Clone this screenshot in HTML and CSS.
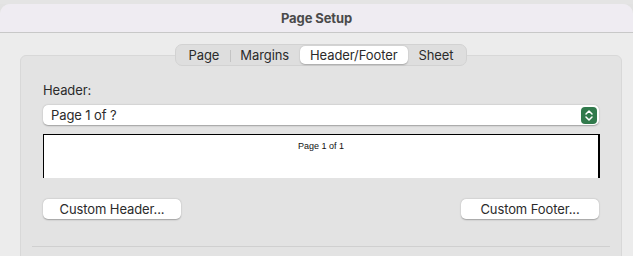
FILE: index.html
```html
<!DOCTYPE html>
<html lang="en">
<head>
    <meta charset="UTF-8">
    <meta name="viewport" content="width=device-width, initial-scale=1.0">
    <title>Page Setup</title>
    <link rel="stylesheet" href="styles.css">
</head>
<body>

    <div class="backdrop"></div>

    <div class="sheet">
        <div class="titlebar">Page Setup</div>

        <div class="content">
            <div class="tabs">
                <span class="tab">Page</span>
                <span class="tab">Margins</span>
                <span class="tab selected">Header/Footer</span>
                <span class="tab">Sheet</span>
            </div>

            <div class="group">
                <label class="label">Header:</label>

                <div class="popup">
                    <span>Page 1 of ?</span>
                    <span class="stepper">
                        <svg width="16" height="17" viewBox="0 0 16 17">
                            <path d="M5 7 L8 4 L11 7" fill="none" stroke="#fff" stroke-width="1.5" stroke-linecap="round" stroke-linejoin="round"/>
                            <path d="M5 10 L8 13 L11 10" fill="none" stroke="#fff" stroke-width="1.5" stroke-linecap="round" stroke-linejoin="round"/>
                        </svg>
                    </span>
                </div>

                <div class="preview">Page 1 of 1</div>

                <div class="buttons">
                    <button class="btn">Custom Header...</button>
                    <button class="btn">Custom Footer...</button>
                </div>

                <div class="separator"></div>
            </div>
        </div>
    </div>

</body>
</html>
```

FILE: styles.css
```css
body {
    margin: 0;
    font-family: Inter, "Liberation Sans", sans-serif;
    font-size: 13px;
    letter-spacing: -0.1px;
    color: #2b2b2b;
    background-color: #e2e2e2;
    height: 256px;
    overflow: hidden;
}

.backdrop {
    height: 4px;
    background-color: #e4e4e4;
}

.sheet {
    background-color: #ececec;
    border-top-left-radius: 10px;
    border-top-right-radius: 10px;
    height: 252px;
    overflow: hidden;
}

.titlebar {
    height: 28px;
    line-height: 28px;
    text-align: center;
    font-weight: 700;
    color: #4a4a4a;
    background-color: #efecf2;
    border-bottom: 1px solid #c8c8c8;
}

.content {
    padding: 11px 11px 0 20px;
    display: flex;
    flex-direction: column;
    align-items: center;
}

.tabs {
    display: flex;
    height: 22px;
    padding: 0 2px;
    background-color: #dedede;
    border: 1px solid #d2d2d2;
    border-radius: 7px;
    box-sizing: border-box;
    align-items: center;
    position: relative;
    z-index: 1;
}

.tab {
    padding: 0 10.5px;
    line-height: 18px;
    color: #2b2b2b;
    position: relative;
}

.tab + .tab::before {
    content: "";
    position: absolute;
    left: 0;
    top: 4px;
    height: 12px;
    border-left: 1px solid #c4c4c4;
}

.tab.selected {
    background-color: #fff;
    border-radius: 5px;
    box-shadow: 0 0.5px 1.5px rgba(0, 0, 0, 0.25);
}

.tab.selected::before,
.tab.selected + .tab::before {
    display: none;
}

.group {
    align-self: stretch;
    margin-top: -11px;
    padding: 26px 22px 0 22px;
    height: 230px;
    background-color: #e3e3e3;
    border: 1px solid #d8d8d8;
    border-radius: 6px;
    display: flex;
    flex-direction: column;
}

.label {
    line-height: 16px;
    color: #2b2b2b;
}

.popup {
    margin-top: 7px;
    height: 20px;
    background-color: #fff;
    border-radius: 5px;
    box-shadow: 0 0.5px 1.5px rgba(0, 0, 0, 0.3);
    display: flex;
    align-items: center;
    justify-content: space-between;
    padding: 0 2px 0 8px;
    font-size: 13px;
}

.stepper {
    width: 16px;
    height: 17px;
    background-color: #317a4c;
    border-radius: 4px;
    display: flex;
}

.preview {
    margin-top: 9px;
    height: 44px;
    margin-right: -1px;
    background-color: #fff;
    border-top: 1px solid #000;
    border-left: 1px solid #000;
    border-right: 2px solid #000;
    text-align: center;
    font-family: "Liberation Sans", Arial, sans-serif;
    font-size: 9px;
    letter-spacing: 0;
    padding-top: 6px;
    box-sizing: border-box;
    color: #111;
}

.buttons {
    margin-top: 21px;
    display: flex;
    justify-content: space-between;
}

.btn {
    width: 138px;
    height: 20px;
    background-color: #fff;
    border: none;
    border-radius: 5px;
    box-shadow: 0 0.5px 1.5px rgba(0, 0, 0, 0.3);
    font-family: Inter, "Liberation Sans", sans-serif;
    font-size: 13px;
    letter-spacing: -0.1px;
    color: #2b2b2b;
    padding: 0;
    cursor: pointer;
}

.separator {
    margin: 27px -11px 0 -11px;
    border-top: 1px solid #d0d0d0;
}
```
